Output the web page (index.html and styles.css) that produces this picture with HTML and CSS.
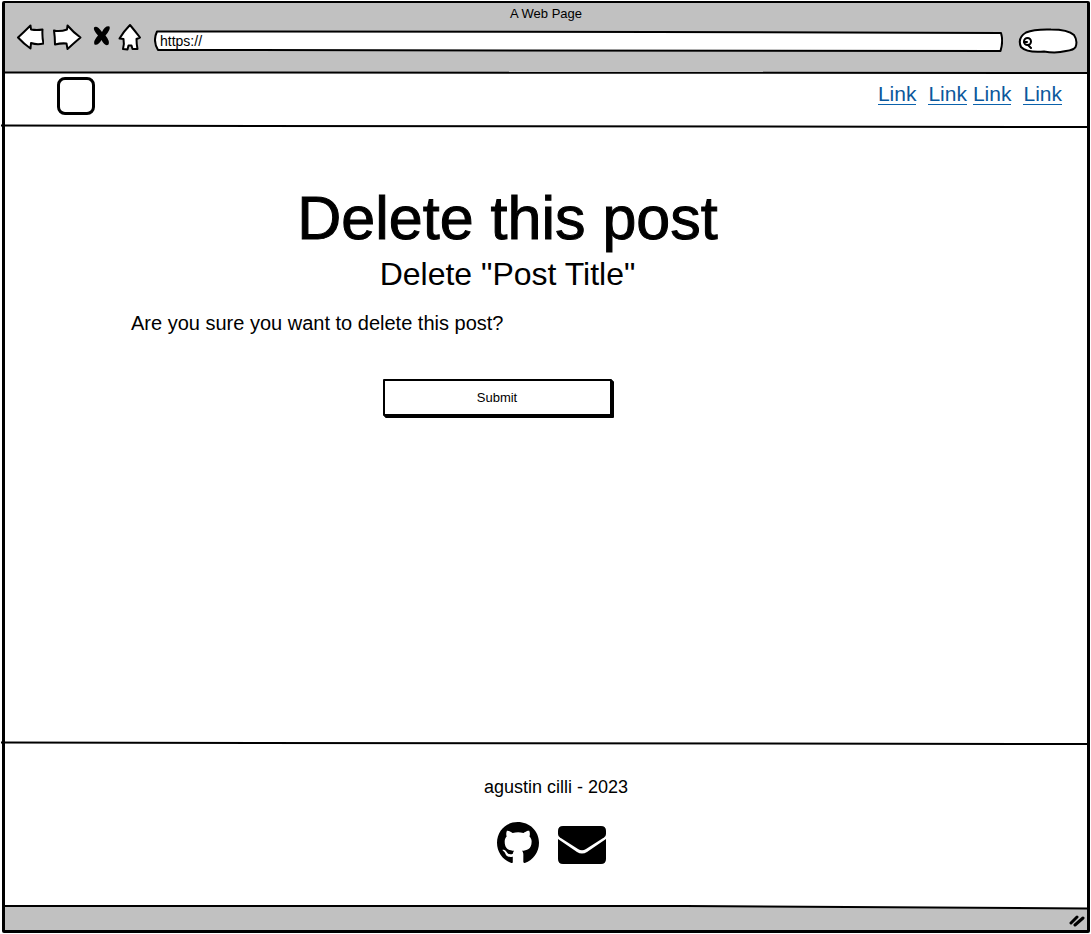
FILE: index.html
```html
<!DOCTYPE html>
<html lang="en">
<head>
<meta charset="utf-8">
<meta name="viewport" content="width=device-width, initial-scale=1">
<title>A Web Page</title>
<link rel="stylesheet" href="styles.css">
</head>
<body>
<div class="window">
  <div class="chrome">
    <div class="chrome-title">A Web Page</div>
    <div class="toolbar">
      <button class="tool" type="button" aria-label="Back">
        <svg class="sketch" width="28" height="28" viewBox="0 0 28 28"><path d="M2 14.500Q8 9 14.500 2.500L15 6.500Q21 7.500 26.500 6.500Q26 14 27.500 20.500Q21 22 15 20L14.500 25.500Q8 21 2 14.500Z"/></svg>
      </button>
      <button class="tool tool-forward" type="button" aria-label="Forward">
        <svg class="sketch" width="30" height="28" viewBox="0 0 30 28"><path d="M2 7.500Q8 9 15 6.500L15.500 2.500Q21 9 28.500 14.500Q22 20 15.500 26L14.500 20.500Q9 20 3 21.500Q3 14 2 7.500Z"/></svg>
      </button>
      <button class="tool tool-stop" type="button" aria-label="Stop">
        <svg width="18" height="22" viewBox="0 0 18 22"><path d="M1 2.500Q4 0 9 7Q12 .5 16.500 1.500Q18 4 12.500 10.500Q17 16 15.500 19.500Q12 22 8.500 15Q5 21 1.500 19.500Q0 16 5 10.500Q0 5 1 2.500Z"/></svg>
      </button>
      <button class="tool tool-home" type="button" aria-label="Home">
        <svg class="sketch" width="24" height="28" viewBox="0 0 24 28"><path d="M12 2Q17 8 22 14.500L18.500 16Q18.500 21 19.500 26L14.500 26L13.500 22.500L10.500 22.500L9.500 26.500L5 26Q6.500 21 5.500 16L1.500 15.500Q6 8 12 2Z"/></svg>
      </button>
      <div class="field field-url">
        <svg class="sketch field-shape" viewBox="0 0 848 22" preserveAspectRatio="none"><path d="M3 1.500Q300 1 500 2Q700 3 846 3Q848.500 11 845.500 21L4 20Q-1.500 11 3 1.500Z"/></svg>
        <input class="field-input" type="text" value="https://" aria-label="Address">
      </div>
      <div class="field field-search">
        <svg class="sketch field-shape" viewBox="0 0 60 26" preserveAspectRatio="none"><path d="M8 4.500Q16 1 33 1.500Q50 1.500 56 7Q60 13 57.500 19Q56 22 48 23Q38 25.500 26 23.500Q9 25 3 19Q-1 10 8 4.500Z"/></svg>
        <svg class="sketch lens" width="12" height="12" viewBox="0 0 12 12"><circle cx="5.500" cy="4.500" r="3.500"/><path d="M2 5H5M6 8L9 11"/></svg>
        <input class="field-input" type="search" aria-label="Search">
      </div>
    </div>
  </div>
  <svg class="rule" viewBox="0 0 1082 3" preserveAspectRatio="none"><path class="rule-grey" d="M0 0H1082V1H0Z"/><path class="rule-thick" d="M0 .5L1082 1"/></svg>
  <header class="site-header">
    <a class="logo" href="#" aria-label="Home page"></a>
    <nav class="links">
      <div class="link-pair"><a href="#">Link</a><a href="#">Link</a></div>
      <div class="link-pair"><a href="#">Link</a><a href="#">Link</a></div>
    </nav>
  </header>
  <svg class="rule" viewBox="0 0 1082 3" preserveAspectRatio="none"><path class="rule-thin" d="M-4 .6Q500 1 1082 2"/></svg>
  <main class="content">
    <h1>Delete this post</h1>
    <h2>Delete "Post Title"</h2>
    <form class="confirm">
      <p>Are you sure you want to delete this post?</p>
      <button class="submit" type="button">Submit</button>
    </form>
  </main>
  <svg class="rule" viewBox="0 0 1082 3" preserveAspectRatio="none"><path class="rule-thin" d="M-4 .6Q500 1 1082 2"/></svg>
  <footer class="site-footer">
    <p>agustin cilli - 2023</p>
    <div class="contacts">
      <a href="#" aria-label="GitHub">
        <svg width="42" height="42" viewBox="0 0 496 496"><path transform="translate(0 -8)" d="M244.800 8C106.100 8 0 113.300 0 252c0 110.900 69.800 205.800 169.500 239.200 12.800 2.300 17.300-5.600 17.300-12.100 0-6.200-.3-40.400-.3-61.400 0 0-70 15-84.700-29.800 0 0-11.400-29.100-27.800-36.600 0 0-22.900-15.700 1.600-15.400 0 0 24.900 2 38.600 25.800 21.900 38.600 58.600 27.500 72.900 20.900 2.300-16 8.800-27.100 16-33.700-55.900-6.200-112.300-14.300-112.300-110.500 0-27.500 7.600-41.300 23.600-58.900-2.600-6.500-11.100-33.300 2.600-67.900 20.900-6.500 69 27 69 27 20-5.600 41.500-8.500 62.800-8.500s42.800 2.900 62.800 8.500c0 0 48.100-33.600 69-27 13.700 34.700 5.200 61.400 2.600 67.900 16 17.700 25.800 31.500 25.800 58.900 0 96.500-58.900 104.200-114.800 110.500 9.200 7.900 17 22.900 17 46.400 0 33.700-.3 75.400-.3 83.600 0 6.500 4.600 14.400 17.300 12.100C428.200 457.800 496 362.900 496 252 496 113.300 383.500 8 244.800 8z"/></svg>
      </a>
      <a class="mail" href="#" aria-label="Email">
        <svg width="48" height="38" viewBox="0 0 48 38"><path d="M0 8V5Q0 0 5 0H43Q48 0 48 5V8Q48 10 46 11.500L28 23Q24 25.500 20 23L2 11.500Q0 10 0 8Z"/><path d="M0 13L19 26Q24 29 29 26L48 13V33Q48 38 43 38H5Q0 38 0 33Z"/></svg>
      </a>
    </div>
  </footer>
  <svg class="rule rule-status" viewBox="0 0 1082 5" preserveAspectRatio="none"><path class="rule-grey" d="M0 1H680L1082 4V5H0Z"/><path class="rule-thick" d="M0 1L680 1Q800 1 1082 3.500"/></svg>
  <div class="statusbar">
    <svg class="grip" width="16" height="14" viewBox="0 0 16 14"><path d="M2 10L8 4M6 12L14 5"/></svg>
  </div>
</div>
</body>
</html>
```
FILE: styles.css
```css
* { box-sizing: border-box; }

body {
  margin: 0;
  padding: 1px 1px 1px 2px;
  background: #fff;
  color: #000;
  font-family: "Liberation Sans", Arial, sans-serif;
}

h1, h2, p { margin: 0; font-weight: 400; }

button, input { font: inherit; color: inherit; }

svg { display: block; flex-shrink: 0; }

.window {
  display: flex;
  flex-direction: column;
  min-height: calc(100vh - 2px);
  border: 3px solid #000;
  border-top-width: 2px;
  border-radius: 2px;
}

.sketch {
  fill: #fff;
  stroke: #000;
  stroke-width: 2;
  stroke-linejoin: round;
  stroke-linecap: round;
}

/* Browser chrome */
.chrome { background: #c1c1c1; padding-bottom: 16px; }

.chrome-title {
  font-size: 13px;
  line-height: 21px;
  text-align: center;
}

.toolbar {
  display: flex;
  align-items: center;
  height: 32px;
  padding: 0 9px 0 11px;
}

.tool {
  display: block;
  flex: none;
  margin: 0;
  padding: 0 0 6px;
  border: 0;
  background: none;
}

.tool-forward { margin-left: 8px; }
.tool-stop { margin-left: 11px; padding-bottom: 8px; }
.tool-home { margin-left: 7px; }

.field { position: relative; }

.field-shape {
  position: absolute;
  inset: 0;
  width: 100%;
  height: 100%;
}

.field-shape path { vector-effect: non-scaling-stroke; }

.field-url { flex: 1; height: 22px; margin: 2px 15px 0 12px; }
.field-search { flex: none; width: 60px; height: 26px; margin-top: 2px; }

.lens { position: absolute; left: 4px; top: 9px; fill: none; }

.field-input {
  position: relative;
  display: block;
  width: 100%;
  height: 100%;
  margin: 0;
  padding: 0 6px;
  border: 0;
  outline: 0;
  background: none;
  font-size: 14px;
}

.field-search .field-input { padding-left: 18px; }

/* Hand-drawn separators */
.rule { width: 100%; height: 3px; overflow: visible; }
.rule-status { height: 5px; }
.rule path { vector-effect: non-scaling-stroke; }
.rule-grey { fill: #c1c1c1; }
.rule-thick { fill: none; stroke: #000; stroke-width: 2; }
.rule-thin { fill: none; stroke: #000; stroke-width: 2; }

/* Page header */
.site-header {
  display: flex;
  justify-content: space-between;
  align-items: flex-start;
  height: 50px;
  padding: 2px 25px 0 52px;
}

.logo {
  width: 38px;
  height: 38px;
  border: 3px solid #000;
  border-radius: 8px;
}

.links { display: flex; gap: 6px; padding-top: 7px; }
.link-pair { display: flex; gap: 12px; }

.links a {
  color: #0b589c;
  font-size: 21px;
  line-height: 20px;
  text-decoration: none;
  border-bottom: 1px solid #0b62ac;
}

/* Content */
.content {
  flex: 1;
  padding: 54px 203px 40px 126px;
}

h1 {
  font-size: 61px;
  line-height: 72px;
  text-align: center;
  -webkit-text-stroke: 1px #000;
}

h2 { font-size: 32px; line-height: 40px; text-align: center; }

.confirm {
  display: flex;
  flex-direction: column;
  padding-top: 17px;
}

.confirm p { font-size: 20px; line-height: 24px; }

.submit {
  align-self: center;
  width: 229px;
  height: 37px;
  margin: 44px 21px 0 0;
  padding: 0;
  border: 2px solid #000;
  border-radius: 1px;
  background: #fff;
  box-shadow: 1px 1px #000, 2px 2px #000;
  font-size: 13px;
}

/* Footer */
.site-footer {
  display: flex;
  flex-direction: column;
  align-items: center;
  gap: 23px;
  padding: 30px 0 41px 20px;
}

.site-footer p { font-size: 18px; line-height: 24px; }

.contacts { display: flex; gap: 19px; margin-right: 9px; }
.contacts a { color: inherit; }
.contacts path { fill: currentColor; }
.mail { padding-top: 4px; }

.statusbar {
  display: flex;
  justify-content: flex-end;
  align-items: center;
  height: 20px;
  padding-right: 2px;
  background: #c1c1c1;
}

.grip {
  fill: none;
  stroke: #000;
  stroke-width: 3;
  stroke-linecap: round;
}
```
